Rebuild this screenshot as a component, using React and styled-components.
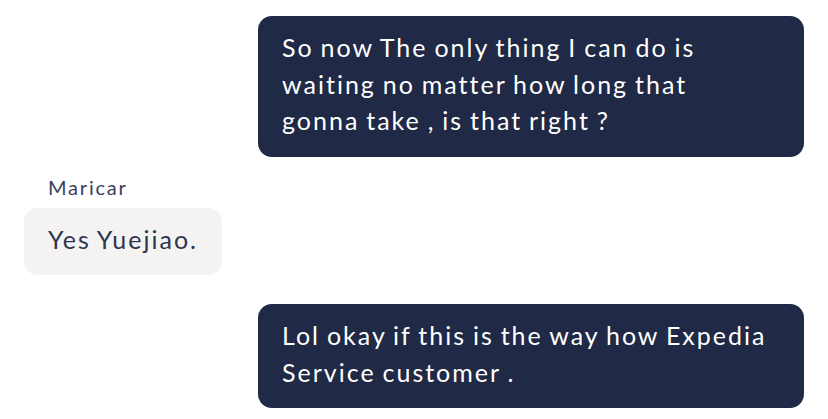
import React from "react";
import styled, { createGlobalStyle } from "styled-components";

const GlobalStyle = createGlobalStyle`
  body {
    margin: 0;
    background: #ffffff;
    font-family: "Lato", "Noto Sans", sans-serif;
  }
`;

const messages = [
  { id: 1, mine: true, text: "So now The only thing I can do is waiting no matter how long that gonna take , is that right ?" },
  { id: 2, mine: false, author: "Maricar", text: "Yes Yuejiao." },
  { id: 3, mine: true, text: "Lol okay if this is the way how Expedia Service customer ." },
];

const App = () => {
  return (
    <>
      <GlobalStyle />
      <Thread>
        {messages.map((m) => (
          <Message key={m.id} mine={m.mine}>
            {m.author && <Author>{m.author}</Author>}
            <Bubble mine={m.mine}>{m.text}</Bubble>
          </Message>
        ))}
      </Thread>
    </>
  );
};

export default App;

const Thread = styled.div`
  display: flex;
  flex-direction: column;
  gap: 29px;
  padding: 16px 24px 12px 24px;
`;

const Message = styled.div`
  display: flex;
  flex-direction: column;
  align-items: ${(p) => (p.mine ? "flex-end" : "flex-start")};
  margin-top: ${(p) => (p.mine ? "0" : "-13px")};
`;

const Author = styled.div`
  font-size: 20px;
  line-height: 28px;
  letter-spacing: 1.8px;
  color: #3b4058;
  padding-left: 24px;
  margin-bottom: 7px;
`;

const Bubble = styled.div`
  box-sizing: border-box;
  width: ${(p) => (p.mine ? "546px" : "auto")};
  padding: ${(p) => (p.mine ? "13px 35px 18px 24px" : "13px 24px 18px 24px")};
  border-radius: 14px;
  font-size: 25px;
  line-height: 36.5px;
  letter-spacing: 2px;
  word-spacing: -1.5px;
  background: ${(p) => (p.mine ? "#202945" : "#f4f3f2")};
  color: ${(p) => (p.mine ? "#ffffff" : "#2f3550")};
`;
